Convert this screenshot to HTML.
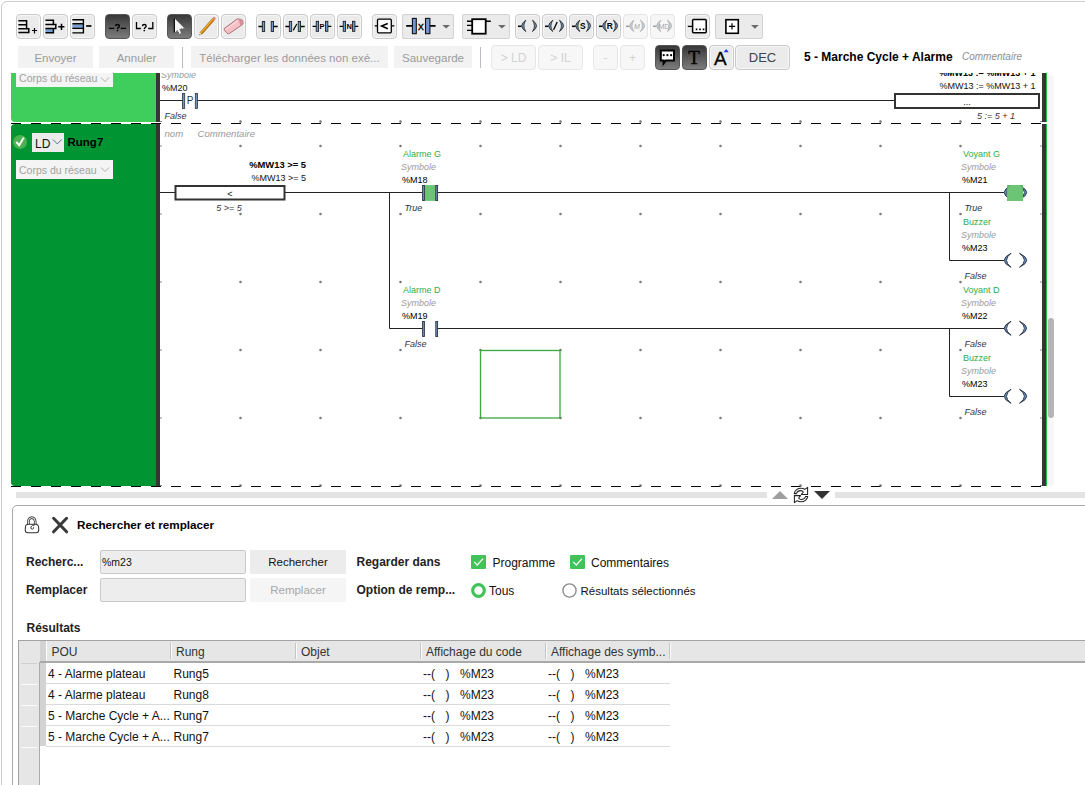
<!DOCTYPE html>
<html><head><meta charset="utf-8">
<style>
*{box-sizing:border-box;margin:0;padding:0}
html,body{width:1085px;height:785px;overflow:hidden;background:#fff}
body{position:relative;font-family:"Liberation Sans",sans-serif;color:#000}
.a{position:absolute}
.outer{position:absolute;left:1px;top:1px;width:1200px;height:900px;border:1px solid #cdcdcd;border-radius:6px}
.tb{position:absolute;top:14px;width:25px;height:25px;border:1px solid #c9c9c9;border-radius:4px;background:#ebebeb;box-shadow:inset 0 0 0 1px #f7f7f7}
.tb svg{position:absolute;left:-1px;top:-1px;width:24px;height:24px;overflow:visible}
.dk{background:linear-gradient(#383838,#7c7c7c);border-color:#555;box-shadow:none}
.dis{background:#f6f6f6;border-color:#e4e4e4;box-shadow:none}
.dd{position:absolute;top:14px;height:25px;border:1px solid #d2d2d2;border-radius:2px;background:#ebebeb}
.dd svg{position:absolute;left:-1px;top:-1px;overflow:visible}
.b2{position:absolute;top:46px;height:22px;background:#f2f2f2;color:#9b9b9b;font-size:11.5px;line-height:24px;text-align:center;white-space:nowrap}
.b3{position:absolute;top:45px;height:25px;background:#f7f7f7;border:1px solid #e6e6e6;border-radius:4px;color:#d2d2d2;font-size:12px;line-height:25px;text-align:center}
.sep{position:absolute;top:47px;width:1px;height:21px;background:#b9bdc4}
</style></head>
<body>
<div class="outer"></div>

<!--LADDER-->
<svg class="a" style="left:0;top:0" width="1085" height="785" viewBox="0 0 1085 785">
<defs><clipPath id="lc"><rect x="0" y="73" width="1085" height="416"/></clipPath></defs>
<g clip-path="url(#lc)" font-family="Liberation Sans" font-size="9">
<path d="M11 40H156V122H15Q11 122 11 118Z" fill="#3fcd5b"/>
<rect x="16" y="66" width="97" height="21" fill="#f4f4f4"/>
<text x="19" y="82" font-size="10.6" fill="#a2a2a2">Corps du réseau</text>
<path d="M101 77.5L105 81.5L109 77.5" fill="none" stroke="#a8a8a8" stroke-width=".9"/>
<path d="M15 124H156V486H15Q11 486 11 482V128Q11 124 15 124Z" fill="#009432"/>
<rect x="156" y="40" width="4" height="82" fill="#353535"/>
<rect x="156" y="123" width="4" height="363" fill="#353535"/>
<rect x="1042" y="40" width="4" height="82" fill="#353535"/>
<rect x="1046" y="40" width="1" height="82" fill="#1fbf3f"/>
<rect x="1042" y="124" width="4" height="362" fill="#353535"/>
<rect x="1046" y="124" width="1" height="362" fill="#1fbf3f"/>
<rect x="1047" y="75" width="7" height="411" rx="3" fill="#f7f7f7"/>
<rect x="1048" y="318" width="6" height="100" rx="3" fill="#b5b5b5"/>
<path d="M11 123.5H1042" stroke="#000" stroke-width="1.1" stroke-dasharray="10 10"/>
<path d="M11 486.5H1042" stroke="#000" stroke-width="1.1" stroke-dasharray="10 10"/>
<rect x="160" y="121.0" width="2" height="1" fill="#8a8a8a"/>
<circle cx="240.5" cy="121.5" r="1.25" fill="#767676"/>
<circle cx="320.5" cy="121.5" r="1.25" fill="#767676"/>
<circle cx="400.5" cy="121.5" r="1.25" fill="#767676"/>
<circle cx="480.5" cy="121.5" r="1.25" fill="#767676"/>
<circle cx="560.5" cy="121.5" r="1.25" fill="#767676"/>
<circle cx="640.5" cy="121.5" r="1.25" fill="#767676"/>
<circle cx="720.5" cy="121.5" r="1.25" fill="#767676"/>
<circle cx="800.5" cy="121.5" r="1.25" fill="#767676"/>
<circle cx="880.5" cy="121.5" r="1.25" fill="#767676"/>
<circle cx="960.5" cy="121.5" r="1.25" fill="#767676"/>
<rect x="1040" y="121.0" width="2" height="1" fill="#8a8a8a"/>
<rect x="160" y="145.5" width="2" height="1" fill="#8a8a8a"/>
<circle cx="240.5" cy="146" r="1.25" fill="#767676"/>
<circle cx="320.5" cy="146" r="1.25" fill="#767676"/>
<circle cx="400.5" cy="146" r="1.25" fill="#767676"/>
<circle cx="480.5" cy="146" r="1.25" fill="#767676"/>
<circle cx="560.5" cy="146" r="1.25" fill="#767676"/>
<circle cx="640.5" cy="146" r="1.25" fill="#767676"/>
<circle cx="720.5" cy="146" r="1.25" fill="#767676"/>
<circle cx="800.5" cy="146" r="1.25" fill="#767676"/>
<circle cx="880.5" cy="146" r="1.25" fill="#767676"/>
<circle cx="960.5" cy="146" r="1.25" fill="#767676"/>
<rect x="1040" y="145.5" width="2" height="1" fill="#8a8a8a"/>
<rect x="160" y="213.5" width="2" height="1" fill="#8a8a8a"/>
<circle cx="240.5" cy="214" r="1.25" fill="#767676"/>
<circle cx="320.5" cy="214" r="1.25" fill="#767676"/>
<circle cx="400.5" cy="214" r="1.25" fill="#767676"/>
<circle cx="480.5" cy="214" r="1.25" fill="#767676"/>
<circle cx="560.5" cy="214" r="1.25" fill="#767676"/>
<circle cx="640.5" cy="214" r="1.25" fill="#767676"/>
<circle cx="720.5" cy="214" r="1.25" fill="#767676"/>
<circle cx="800.5" cy="214" r="1.25" fill="#767676"/>
<circle cx="880.5" cy="214" r="1.25" fill="#767676"/>
<circle cx="960.5" cy="214" r="1.25" fill="#767676"/>
<rect x="1040" y="213.5" width="2" height="1" fill="#8a8a8a"/>
<rect x="160" y="281.5" width="2" height="1" fill="#8a8a8a"/>
<circle cx="240.5" cy="282" r="1.25" fill="#767676"/>
<circle cx="320.5" cy="282" r="1.25" fill="#767676"/>
<circle cx="400.5" cy="282" r="1.25" fill="#767676"/>
<circle cx="480.5" cy="282" r="1.25" fill="#767676"/>
<circle cx="560.5" cy="282" r="1.25" fill="#767676"/>
<circle cx="640.5" cy="282" r="1.25" fill="#767676"/>
<circle cx="720.5" cy="282" r="1.25" fill="#767676"/>
<circle cx="800.5" cy="282" r="1.25" fill="#767676"/>
<circle cx="880.5" cy="282" r="1.25" fill="#767676"/>
<circle cx="960.5" cy="282" r="1.25" fill="#767676"/>
<rect x="1040" y="281.5" width="2" height="1" fill="#8a8a8a"/>
<rect x="160" y="349.5" width="2" height="1" fill="#8a8a8a"/>
<circle cx="240.5" cy="350" r="1.25" fill="#767676"/>
<circle cx="320.5" cy="350" r="1.25" fill="#767676"/>
<circle cx="400.5" cy="350" r="1.25" fill="#767676"/>
<circle cx="480.5" cy="350" r="1.25" fill="#767676"/>
<circle cx="560.5" cy="350" r="1.25" fill="#767676"/>
<circle cx="640.5" cy="350" r="1.25" fill="#767676"/>
<circle cx="720.5" cy="350" r="1.25" fill="#767676"/>
<circle cx="800.5" cy="350" r="1.25" fill="#767676"/>
<circle cx="880.5" cy="350" r="1.25" fill="#767676"/>
<circle cx="960.5" cy="350" r="1.25" fill="#767676"/>
<rect x="1040" y="349.5" width="2" height="1" fill="#8a8a8a"/>
<rect x="160" y="417.5" width="2" height="1" fill="#8a8a8a"/>
<circle cx="240.5" cy="418" r="1.25" fill="#767676"/>
<circle cx="320.5" cy="418" r="1.25" fill="#767676"/>
<circle cx="400.5" cy="418" r="1.25" fill="#767676"/>
<circle cx="480.5" cy="418" r="1.25" fill="#767676"/>
<circle cx="560.5" cy="418" r="1.25" fill="#767676"/>
<circle cx="640.5" cy="418" r="1.25" fill="#767676"/>
<circle cx="720.5" cy="418" r="1.25" fill="#767676"/>
<circle cx="800.5" cy="418" r="1.25" fill="#767676"/>
<circle cx="880.5" cy="418" r="1.25" fill="#767676"/>
<circle cx="960.5" cy="418" r="1.25" fill="#767676"/>
<rect x="1040" y="417.5" width="2" height="1" fill="#8a8a8a"/>
<rect x="160" y="485.0" width="2" height="1" fill="#8a8a8a"/>
<circle cx="240.5" cy="485.5" r="1.25" fill="#767676"/>
<circle cx="320.5" cy="485.5" r="1.25" fill="#767676"/>
<circle cx="400.5" cy="485.5" r="1.25" fill="#767676"/>
<circle cx="480.5" cy="485.5" r="1.25" fill="#767676"/>
<circle cx="560.5" cy="485.5" r="1.25" fill="#767676"/>
<circle cx="640.5" cy="485.5" r="1.25" fill="#767676"/>
<circle cx="720.5" cy="485.5" r="1.25" fill="#767676"/>
<circle cx="800.5" cy="485.5" r="1.25" fill="#767676"/>
<circle cx="880.5" cy="485.5" r="1.25" fill="#767676"/>
<circle cx="960.5" cy="485.5" r="1.25" fill="#767676"/>
<rect x="1040" y="485.0" width="2" height="1" fill="#8a8a8a"/>
<text x="161" y="78" font-style="italic" fill="#9a9a9a">Symbole</text>
<text x="162" y="91" fill="#111">%M20</text>
<text x="164.5" y="118.6" font-style="italic" fill="#333">False</text>
<path d="M160 100.5H182.5M197.5 100.5H894" stroke="#222" stroke-width="1"/>
<rect x="182.5" y="93.5" width="2.2" height="15" fill="#6f93c2" stroke="#2b3340" stroke-width=".8"/>
<rect x="195.3" y="93.5" width="2.2" height="15" fill="#6f93c2" stroke="#2b3340" stroke-width=".8"/>
<text x="190" y="104" font-size="10" text-anchor="middle" fill="#333">P</text>
<text x="1035.5" y="76.3" font-weight="bold" text-anchor="end" fill="#000">%MW13 := %MW13 + 1</text>
<text x="1035.5" y="88.7" text-anchor="end" fill="#111">%MW13 := %MW13 + 1</text>
<rect x="895" y="94" width="144" height="14" fill="#fff" stroke="#333" stroke-width="2"/>
<text x="967" y="105" text-anchor="middle" fill="#111">...</text>
<text x="1015" y="118.8" font-style="italic" text-anchor="end" fill="#333">5 := 5 + 1</text>
<text x="164.5" y="136.5" font-size="9.6" font-style="italic" fill="#9a9a9a">nom</text>
<text x="197.5" y="136.5" font-size="9.6" font-style="italic" fill="#9a9a9a">Commentaire</text>
<text x="306" y="167.8" font-weight="bold" font-size="9.4" text-anchor="end" fill="#000">%MW13 &gt;= 5</text>
<text x="306" y="180.8" text-anchor="end" fill="#111">%MW13 &gt;= 5</text>
<path d="M160 192.5H175M285 192.5H422.5M437.5 192.5H949.5" stroke="#222" stroke-width="1"/>
<rect x="175.5" y="186" width="109" height="13.5" fill="#fff" stroke="#333" stroke-width="2"/>
<text x="230" y="196.5" text-anchor="middle" fill="#111">&lt;</text>
<text x="229" y="210.5" font-style="italic" text-anchor="middle" fill="#333">5 &gt;= 5</text>
<path d="M389.5 192V328.5H422.5M437.5 328.5H949.5" fill="none" stroke="#222" stroke-width="1"/>
<path d="M949.5 192V260.5H1004M949.5 328V396.5H1004M949.5 328.5H1004M949.5 192.5H1004" fill="none" stroke="#222" stroke-width="1"/>
<rect x="424" y="185.1" width="12.2" height="15.8" fill="#6cc474"/><rect x="422.6" y="185.5" width="1.8" height="15" fill="#6f93c2" stroke="#2b3340" stroke-width=".9"/><rect x="435.8" y="185.5" width="1.8" height="15" fill="#6f93c2" stroke="#2b3340" stroke-width=".9"/>
<rect x="422.6" y="321.5" width="1.8" height="15" fill="#6f93c2" stroke="#2b3340" stroke-width=".9"/><rect x="435.8" y="321.5" width="1.8" height="15" fill="#6f93c2" stroke="#2b3340" stroke-width=".9"/>
<path d="M1011 185.5Q997.4 192.5 1011 199.5Q1002 192.5 1011 185.5Z" fill="#6f93c2" stroke="#1f2a38" stroke-width=".9"/><path d="M1019.5 185.5Q1033.9 192.5 1019.5 199.5Q1029.3 192.5 1019.5 185.5Z" fill="#6f93c2" stroke="#1f2a38" stroke-width=".9"/><rect x="1007.2" y="185.0" width="15.7" height="16" fill="#4fae5a"/><rect x="1007.2" y="185.0" width="15.7" height="15" rx="5" fill="#6cc474"/><rect x="1007.2" y="194.5" width="15.7" height="6.5" fill="#6cc474"/>
<path d="M1011 253.3Q997.4 260.3 1011 267.3Q1002 260.3 1011 253.3Z" fill="#6f93c2" stroke="#1f2a38" stroke-width=".9"/><path d="M1019.5 253.3Q1033.9 260.3 1019.5 267.3Q1029.3 260.3 1019.5 253.3Z" fill="#6f93c2" stroke="#1f2a38" stroke-width=".9"/>
<path d="M1011 321.3Q997.4 328.3 1011 335.3Q1002 328.3 1011 321.3Z" fill="#6f93c2" stroke="#1f2a38" stroke-width=".9"/><path d="M1019.5 321.3Q1033.9 328.3 1019.5 335.3Q1029.3 328.3 1019.5 321.3Z" fill="#6f93c2" stroke="#1f2a38" stroke-width=".9"/>
<path d="M1011 389.3Q997.4 396.3 1011 403.3Q1002 396.3 1011 389.3Z" fill="#6f93c2" stroke="#1f2a38" stroke-width=".9"/><path d="M1019.5 389.3Q1033.9 396.3 1019.5 403.3Q1029.3 396.3 1019.5 389.3Z" fill="#6f93c2" stroke="#1f2a38" stroke-width=".9"/>
<text x="403" y="157" fill="#2fae44">Alarme G</text><text x="401" y="170" font-style="italic" fill="#9a9a9a">Symbole</text><text x="402" y="183" fill="#000">%M18</text><text x="404.5" y="210.5" font-style="italic" fill="#333">True</text>
<text x="403" y="293" fill="#2fae44">Alarme D</text><text x="401" y="306" font-style="italic" fill="#9a9a9a">Symbole</text><text x="402" y="319" fill="#000">%M19</text><text x="404.5" y="346.5" font-style="italic" fill="#333">False</text>
<text x="963" y="157" fill="#2fae44">Voyant G</text><text x="961" y="170" font-style="italic" fill="#9a9a9a">Symbole</text><text x="962" y="183" fill="#000">%M21</text><text x="964.5" y="210.5" font-style="italic" fill="#333">True</text>
<text x="963" y="225" fill="#2fae44">Buzzer</text><text x="961" y="238" font-style="italic" fill="#9a9a9a">Symbole</text><text x="962" y="251" fill="#000">%M23</text><text x="964.5" y="278.5" font-style="italic" fill="#333">False</text>
<text x="963" y="293" fill="#2fae44">Voyant D</text><text x="961" y="306" font-style="italic" fill="#9a9a9a">Symbole</text><text x="962" y="319" fill="#000">%M22</text><text x="964.5" y="346.5" font-style="italic" fill="#333">False</text>
<text x="963" y="361" fill="#2fae44">Buzzer</text><text x="961" y="374" font-style="italic" fill="#9a9a9a">Symbole</text><text x="962" y="387" fill="#000">%M23</text><text x="964.5" y="414.5" font-style="italic" fill="#333">False</text>
<rect x="480.5" y="350.5" width="79.5" height="67.5" fill="none" stroke="#3aa83f" stroke-width="1.3"/>
</g>
<rect x="16" y="492" width="751" height="6" fill="#e2e3e2"/>
<rect x="835" y="492" width="250" height="6" fill="#e2e3e2"/>
<path d="M772 499H788L780 491Z" fill="#9e9e9e"/>
<path d="M814 491H830L822 499Z" fill="#333"/>
</svg>
<!--/LADDER-->
<!--RUNG7HDR-->
<svg class="a" style="left:0;top:0" width="1085" height="160" viewBox="0 0 1085 160">
<circle cx="20" cy="142" r="7" fill="#4db151"/>
<path d="M16.3 141.8L19.2 145.3L23.8 137.6" fill="none" stroke="#fff" stroke-width="1.9"/>
<rect x="32" y="133" width="32" height="19" fill="#ececec"/>
<path d="M53 139.6L57.3 143.9L61.6 139.6" fill="none" stroke="#4a5a80" stroke-width=".9"/>
</svg>
<div class="a" style="left:35px;top:137px;font-size:12px;line-height:15px;color:#111">LD</div>
<div class="a" style="left:67.5px;top:135px;font-size:11.5px;font-weight:bold;line-height:15px;color:#000">Rung7</div>
<div class="a" style="left:16px;top:160px;width:97px;height:19px;background:#f4f4f4"></div>
<div class="a" style="left:19px;top:163px;font-size:10.5px;line-height:15px;color:#a2a2a2;white-space:nowrap">Corps du réseau</div>
<svg class="a" style="left:0;top:0" width="1085" height="200" viewBox="0 0 1085 200"><path d="M101 167.5L105 171.5L109 167.5" fill="none" stroke="#a8a8a8" stroke-width=".9"/></svg>
<svg class="a" style="left:790px;top:484px" width="22" height="22" viewBox="0 0 22 22">
<path d="M4.2 9.6Q5.5 4.2 11 4.2Q13.2 4.2 14.8 5.4L17.6 3.4V10.4H11.4L13.4 8Q12.4 6.6 11 6.6Q7.2 6.6 6.4 9.6Z" fill="#fff" stroke="#222" stroke-width="1.05" stroke-linejoin="round"/>
<path d="M17.8 12.4Q16.5 17.8 11 17.8Q8.8 17.8 7.2 16.6L4.4 18.6V11.6H10.6L8.6 14Q9.6 15.4 11 15.4Q14.8 15.4 15.6 12.4Z" fill="#fff" stroke="#222" stroke-width="1.05" stroke-linejoin="round"/>
</svg>

<!-- Toolbar row 1 -->
<div class="tb" style="left:16px"><svg viewBox="0 0 24 24"><path d="M2.4 6.8H10.6V14.7M2.4 10.7H10.6M2.4 14.7H12.8V18.4H2.4" fill="none" stroke="#000" stroke-width="1.5"/><path d="M15.9 16.5H21.1M18.5 14.1V19.6" stroke="#000" stroke-width="1.2"/></svg></div>
<div class="tb" style="left:43px"><svg viewBox="0 0 24 24"><rect x="2.4" y="14.8" width="8" height="3.6" fill="#78a0d2"/><path d="M2.4 6.2H10.4V10.4M2.4 10.4H12.8V14.5H2.4M10.4 14.5V18.8H2.4" fill="none" stroke="#000" stroke-width="1.5"/><path d="M15.3 12.7H21.4M18.5 9.8V15.9" stroke="#000" stroke-width="1.5"/></svg></div>
<div class="tb" style="left:70px"><svg viewBox="0 0 24 24"><rect x="2.4" y="10.4" width="11" height="3.6" fill="#78a0d2"/><path d="M2.4 5.7H13.4V18.9H2.4M2.4 9.8H13.4M2.4 14.4H13.4" fill="none" stroke="#000" stroke-width="1.4"/><path d="M16.2 12H21.4" stroke="#000" stroke-width="1.7"/></svg></div>

<div class="tb dk" style="left:105px"><svg viewBox="0 0 24 24"><path d="M3.9 14.4H9.1M15.8 14.4H21" stroke="#000" stroke-width="1.3"/><path d="M10.6 12.2Q10.6 10.5 12.5 10.5Q14.4 10.5 14.4 12.1Q14.4 13.1 13.3 13.6Q12.5 14 12.5 15" fill="none" stroke="#000" stroke-width="1.3"/><circle cx="12.5" cy="16.5" r=".85"/></svg></div>
<div class="tb" style="left:132px"><svg viewBox="0 0 24 24"><path d="M4.5 8V14.5H8.9M16.2 14.5H20.8V8" fill="none" stroke="#000" stroke-width="1.3"/><path d="M10.4 12.2Q10.4 10.5 12.3 10.5Q14.200000000000001 10.5 14.200000000000001 12.1Q14.200000000000001 13.1 13.100000000000001 13.6Q12.3 14 12.3 15" fill="none" stroke="#000" stroke-width="1.3"/><circle cx="12.3" cy="16.5" r=".85"/></svg></div>

<div class="tb dk" style="left:167px"><svg viewBox="0 0 24 24"><path d="M7.6 4.6V18.6L10.2 16.4L12.6 20.4L14.6 19.4L12.8 15.4L17.6 14.4Z" fill="#f4f4f4"/><path d="M7.3 4.4V18.6" stroke="#000" stroke-width="1.2"/><path d="M10.2 16.4L12.6 20.4L14.6 19.4L12.8 15.4L16.8 14.2" fill="none" stroke="#111" stroke-width=".7" stroke-dasharray="1 .8"/></svg></div>
<div class="tb" style="left:194px"><svg viewBox="0 0 24 24"><path d="M5.97 18.54L7.93 20.26L20.58 5.86L18.62 4.14Z" fill="#f2b233"/><path d="M7.93 20.26L20.58 5.86L19.6 5L6.95 19.4Z" fill="#c97a0c"/><path d="M5.97 18.54L7.93 20.26L20.58 5.86M18.62 4.14L5.97 18.54" fill="none" stroke="#7a4a08" stroke-width=".5"/><path d="M18.62 4.14L20.58 5.86L21.9 4.35L19.9 2.65Z" fill="#e8727c"/><path d="M5.3 21.3L5.97 18.54L7.93 20.26Z" fill="#e9d2a6"/><path d="M5.3 21.3L5.8 20L6.6 20.7Z" fill="#333"/></svg></div>
<div class="tb" style="left:221px"><svg viewBox="0 0 24 24"><path d="M3.2 14.6L15.6 5.3Q16.4 4.8 17.6 5L20.4 5.6Q21.6 6 21.9 7.4L22 9.6Q22 10.2 21.4 10.6L8.2 19.6Q7.4 20 6.6 19.6L3.6 16.4Q3 15.4 3.2 14.6Z" fill="#f8c0c6" stroke="#8e4d55" stroke-width=".75"/><path d="M17.6 5.2L19.2 11.6L21.4 10.6Q22 10.2 22 9.6L21.9 7.4Q21.6 6 20.4 5.6Z" fill="#d98f98"/><path d="M4.2 15.8L16.8 6.6" stroke="#fde3e6" stroke-width="1"/></svg></div>

<div class="tb" style="left:256px"><svg viewBox="0 0 24 24"><path d="M2.4 12.45H6.4M17.6 12.45H21.7" stroke="#000" stroke-width="1.4"/><rect x="6.3" y="7.4" width="2.4" height="10.1" fill="#6f99cf" stroke="#111" stroke-width=".8"/><rect x="15.2" y="7.4" width="2.4" height="10.1" fill="#6f99cf" stroke="#111" stroke-width=".8"/></svg></div>
<div class="tb" style="left:283px"><svg viewBox="0 0 24 24"><path d="M2.4 12.45H6.4M17.6 12.45H21.7" stroke="#000" stroke-width="1.4"/><rect x="6.3" y="7.4" width="2.4" height="10.1" fill="#6f99cf" stroke="#111" stroke-width=".8"/><rect x="15.2" y="7.4" width="2.4" height="10.1" fill="#6f99cf" stroke="#111" stroke-width=".8"/><path d="M10.2 16.4L13.8 10" stroke="#000" stroke-width="1.2"/></svg></div>
<div class="tb" style="left:310px"><svg viewBox="0 0 24 24"><path d="M2.6 12.4H6.2M18 12.4H21.3" stroke="#000" stroke-width="1.4"/><rect x="6.2" y="7.3" width="2.4" height="10" fill="#6f99cf" stroke="#111" stroke-width=".8"/><rect x="15.5" y="7.3" width="2.4" height="10" fill="#6f99cf" stroke="#111" stroke-width=".8"/><text x="12.1" y="15.2" font-size="7.5" font-weight="bold" text-anchor="middle" font-family="Liberation Sans">P</text></svg></div>
<div class="tb" style="left:337px"><svg viewBox="0 0 24 24"><path d="M2.6 12.4H6.2M18 12.4H21.3" stroke="#000" stroke-width="1.4"/><rect x="6.2" y="7.3" width="2.4" height="10" fill="#6f99cf" stroke="#111" stroke-width=".8"/><rect x="15.5" y="7.3" width="2.4" height="10" fill="#6f99cf" stroke="#111" stroke-width=".8"/><text x="12.1" y="15.2" font-size="7.5" font-weight="bold" text-anchor="middle" font-family="Liberation Sans">N</text></svg></div>

<div class="tb" style="left:372px"><svg viewBox="0 0 24 24"><rect x="5.5" y="5.2" width="13.8" height="13.6" rx="1" fill="#fff" stroke="#000" stroke-width="1.3"/><path d="M2.7 11.9H5M19.8 11.9H22.3" stroke="#000" stroke-width="1.3"/><path d="M15.8 9.4L9.6 12L15.8 14.8" fill="none" stroke="#000" stroke-width="1.6"/></svg></div>

<div class="dd" style="left:402px;width:52px"><svg width="52" height="24" viewBox="0 0 52 24"><path d="M4.2 11.9H10.2M28 11.9H33.6" stroke="#000" stroke-width="1.6"/><rect x="10.4" y="4.4" width="3.9" height="15.3" fill="#6f99cf" stroke="#111" stroke-width="1.1"/><rect x="23.5" y="4.4" width="4.4" height="15.3" fill="#6f99cf" stroke="#111" stroke-width="1.1"/><text x="18.9" y="15.6" font-size="11.5" text-anchor="middle" font-family="Liberation Sans" fill="#000" stroke="#000" stroke-width=".3">x</text><path d="M40.3 10.9H48L44.15 14.5Z" fill="#6a6a6a"/></svg></div>
<div class="dd" style="left:462px;width:48px"><svg width="48" height="24" viewBox="0 0 48 24"><rect x="10.2" y="5.2" width="13.5" height="14.5" fill="#fff" stroke="#000" stroke-width="1.8"/><path d="M5 7.3H10.2M5 11.4H10.2M5 16.4H10.2M23.7 7.3H28.8" stroke="#000" stroke-width="1.4"/><path d="M36 10.9H43.8L39.9 14.5Z" fill="#6a6a6a"/></svg></div>

<!-- coils -->
<div class="tb" style="left:515px"><svg viewBox="0 0 24 24"><path d="M3 12.3H6.6" stroke="#000" stroke-width="1.5"/><path d="M10.8 6.2Q2.6 11.85 10.8 17.5Q7.0 11.85 10.8 6.2Z" fill="#6f93c2" stroke="#222" stroke-width=".8"/><path d="M17.5 6.2Q25.6 11.85 17.5 17.5Q21.4 11.85 17.5 6.2Z" fill="#6f93c2" stroke="#222" stroke-width=".8"/></svg></div>
<div class="tb" style="left:542px"><svg viewBox="0 0 24 24"><path d="M3 12.3H6.6" stroke="#000" stroke-width="1.5"/><path d="M10.8 6.2Q2.6 11.85 10.8 17.5Q7.0 11.85 10.8 6.2Z" fill="#6f93c2" stroke="#222" stroke-width=".8"/><path d="M17.5 6.2Q25.6 11.85 17.5 17.5Q21.4 11.85 17.5 6.2Z" fill="#6f93c2" stroke="#222" stroke-width=".8"/><path d="M11.6 15.8L15.2 8" stroke="#000" stroke-width="1.3"/></svg></div>
<div class="tb" style="left:569px"><svg viewBox="0 0 24 24"><path d="M3 12.3H6.6" stroke="#000" stroke-width="1.5"/><path d="M10.8 6.2Q2.6 11.85 10.8 17.5Q7.0 11.85 10.8 6.2Z" fill="#6f93c2" stroke="#222" stroke-width=".8"/><path d="M17.5 6.2Q25.6 11.85 17.5 17.5Q21.4 11.85 17.5 6.2Z" fill="#6f93c2" stroke="#222" stroke-width=".8"/><text x="13.9" y="15.1" font-size="8.4" font-weight="bold" text-anchor="middle" font-family="Liberation Sans" fill="#000">S</text></svg></div>
<div class="tb" style="left:596px"><svg viewBox="0 0 24 24"><path d="M3 12.3H6.6" stroke="#000" stroke-width="1.5"/><path d="M10.8 6.2Q2.6 11.85 10.8 17.5Q7.0 11.85 10.8 6.2Z" fill="#6f93c2" stroke="#222" stroke-width=".8"/><path d="M17.5 6.2Q25.6 11.85 17.5 17.5Q21.4 11.85 17.5 6.2Z" fill="#6f93c2" stroke="#222" stroke-width=".8"/><text x="13.9" y="15.1" font-size="8.4" font-weight="bold" text-anchor="middle" font-family="Liberation Sans" fill="#000">R</text></svg></div>
<div class="tb dis" style="left:623px"><svg viewBox="0 0 24 24" opacity=".35"><path d="M3 12.3H6.6" stroke="#000" stroke-width="1.5"/><path d="M10.8 6.2Q2.6 11.85 10.8 17.5Q7.0 11.85 10.8 6.2Z" fill="#6f93c2" stroke="#222" stroke-width=".8"/><path d="M17.5 6.2Q25.6 11.85 17.5 17.5Q21.4 11.85 17.5 6.2Z" fill="#6f93c2" stroke="#222" stroke-width=".8"/><text x="13.9" y="14.8" font-size="7" font-style="italic" text-anchor="middle" font-family="Liberation Sans">M</text></svg></div>
<div class="tb dis" style="left:650px"><svg viewBox="0 0 24 24" opacity=".35"><path d="M3 12.3H6.6" stroke="#000" stroke-width="1.5"/><path d="M10.8 6.2Q2.6 11.85 10.8 17.5Q7.0 11.85 10.8 6.2Z" fill="#6f93c2" stroke="#222" stroke-width=".8"/><path d="M17.5 6.2Q25.6 11.85 17.5 17.5Q21.4 11.85 17.5 6.2Z" fill="#6f93c2" stroke="#222" stroke-width=".8"/><text x="13.9" y="14.8" font-size="7" text-anchor="middle" font-family="Liberation Sans">MD</text></svg></div>

<div class="tb" style="left:685px"><svg viewBox="0 0 24 24"><rect x="7.6" y="5.6" width="13.6" height="13.2" rx="1" fill="#fff" stroke="#000" stroke-width="1.5"/><path d="M2.8 12.4H7.2" stroke="#000" stroke-width="1.3"/><path d="M10.7 15.4h1.7M14.2 15.4h1.7M17.7 15.4h1.7" stroke="#000" stroke-width="1.7"/></svg></div>
<div class="dd" style="left:715px;width:48px"><svg width="48" height="24" viewBox="0 0 48 24"><rect x="10.9" y="5.7" width="12.4" height="13.6" fill="#fff" stroke="#000" stroke-width="1.6"/><path d="M13.9 12.4H20.2M17 9.3V15.5" stroke="#000" stroke-width="1.2"/><path d="M36 11H43.8L39.9 14.7Z" fill="#6a6a6a"/></svg></div>

<!-- Toolbar row 2 -->
<div class="b2" style="left:18px;width:75px">Envoyer</div>
<div class="b2" style="left:99px;width:75px">Annuler</div>
<div class="sep" style="left:182px"></div>
<div class="b2" style="left:191px;width:197px">Télécharger les données non exé...</div>
<div class="b2" style="left:394px;width:78px">Sauvegarde</div>
<div class="sep" style="left:480px"></div>
<div class="b3" style="left:491px;width:45px">&gt; LD</div>
<div class="b3" style="left:538px;width:45px">&gt; IL</div>
<div class="b3" style="left:593px;width:25px">-</div>
<div class="b3" style="left:620px;width:25px">+</div>


<div class="tb dk" style="left:655px;top:45px;width:25px;height:25px"><svg viewBox="0 0 24 24"><path d="M5.8 5.4H19V15.4H10.8L8.6 18.4V15.4H5.8Z" fill="#fff" stroke="#000" stroke-width="2"/><circle cx="8.7" cy="10.2" r="1.1"/><circle cx="12.4" cy="10.2" r="1.1"/><circle cx="16.1" cy="10.2" r="1.1"/></svg></div>
<div class="tb dk" style="left:682px;top:45px;width:25px;height:25px"><svg viewBox="0 0 24 24"><text x="12.1" y="19.4" font-size="19" text-anchor="middle" font-family="Liberation Serif" fill="#000" stroke="#000" stroke-width=".35">T</text></svg></div>
<div class="tb" style="left:709px;top:45px;width:25px;height:25px"><svg viewBox="0 0 24 24"><text x="11.4" y="20.2" font-size="19" text-anchor="middle" font-family="Liberation Sans" fill="#000" stroke="#000" stroke-width=".3">A</text><path d="M14.6 7.2L17.2 4.1L19.8 7.2Z" fill="#1a3cff"/></svg></div>
<div class="tb" style="left:735px;top:45px;width:55px;height:25px;font-size:13px;line-height:23px;text-align:center;color:#3d4450">DEC</div>
<div class="a" style="left:804px;top:49px;font-size:12px;font-weight:bold;line-height:16px;white-space:nowrap">5 - Marche Cycle + Alarme</div>
<div class="a" style="left:962px;top:50px;font-size:10px;font-style:italic;color:#8e8e8e;line-height:14px">Commentaire</div>

<!--PANEL-->
<div class="a" style="left:12px;top:505px;width:1100px;height:300px;border:1px solid #a9a9a9;border-radius:5px"></div>
<svg class="a" style="left:0;top:0" width="1085" height="785" viewBox="0 0 1085 785">
<path d="M28.4 524.8V521.4A3.4 3.8 0 0 1 35.2 521.4V524.2" fill="none" stroke="#333" stroke-width="2.6"/>
<path d="M28.4 524.8V521.4A3.4 3.8 0 0 1 35.2 521.4V524.2" fill="none" stroke="#fff" stroke-width="1"/>
<path d="M28.6 524.3H35.4Q38.7 524.3 38.7 528V530.3Q38.7 532.8 36 532.8H28Q25.3 532.8 25.3 530.3V528Q25.3 524.3 28.6 524.3Z" fill="#fff" stroke="#333" stroke-width="1.05"/>
<path d="M35 524.6L32.6 525.6Q30.6 526.4 30.8 528Q31.2 529.4 32.6 529.1Q34 528.6 33.6 527.3" fill="none" stroke="#333" stroke-width="1"/>
<path d="M53.6 518.3L66.6 531.8M66.6 518.3L53.6 531.8" stroke="#383838" stroke-width="3" stroke-linecap="round"/>
</svg>
<div class="a" style="left:77px;top:518px;font-size:11.7px;font-weight:bold;line-height:14px;white-space:nowrap">Rechercher et remplacer</div>
<div class="a" style="left:26px;top:555px;font-size:12px;font-weight:bold;line-height:14px;color:#222">Recherc...</div>
<div class="a" style="left:26px;top:583px;font-size:12px;font-weight:bold;line-height:14px;color:#222">Remplacer</div>
<div class="a" style="left:100px;top:550px;width:146px;height:24px;border:1px solid #c9c9c9;border-radius:2px;background:#ededed;font-size:10.5px;line-height:23px;padding-left:1px;color:#111">%m23</div>
<div class="a" style="left:100px;top:578px;width:146px;height:24px;border:1px solid #c9c9c9;border-radius:2px;background:#ededed"></div>
<div class="a" style="left:250px;top:550px;width:96px;height:24px;background:#ececec;font-size:11.5px;line-height:24px;text-align:center;color:#111">Rechercher</div>
<div class="a" style="left:250px;top:578px;width:96px;height:24px;background:#f5f5f5;font-size:11.5px;line-height:24px;text-align:center;color:#a6a6a6">Remplacer</div>
<div class="a" style="left:356.5px;top:555px;font-size:12px;font-weight:bold;line-height:14px;color:#222">Regarder dans</div>
<div class="a" style="left:356.5px;top:583px;font-size:12px;font-weight:bold;line-height:14px;color:#222;white-space:nowrap">Option de remp...</div>
<svg class="a" style="left:0;top:0" width="1085" height="785" viewBox="0 0 1085 785">
<rect x="471" y="555" width="15" height="14" rx="1" fill="#40c459"/>
<path d="M474.2 561.8L477.3 565L483 558.6" fill="none" stroke="#fff" stroke-width="1.2"/>
<rect x="570" y="555" width="15" height="14" rx="1" fill="#40c459"/>
<path d="M573.2 561.8L576.3 565L582 558.6" fill="none" stroke="#fff" stroke-width="1.2"/>
<circle cx="478.5" cy="590.5" r="5.8" fill="#fff" stroke="#40c459" stroke-width="3.2"/>
<circle cx="569.5" cy="590.5" r="6.6" fill="#fff" stroke="#8c8c8c" stroke-width="1.4"/>
</svg>
<div class="a" style="left:492.5px;top:556px;font-size:12px;line-height:14px;color:#111">Programme</div>
<div class="a" style="left:591px;top:556px;font-size:12px;line-height:14px;color:#111">Commentaires</div>
<div class="a" style="left:489px;top:584px;font-size:12px;line-height:14px;color:#111">Tous</div>
<div class="a" style="left:580.5px;top:584px;font-size:11.5px;line-height:14px;color:#111;white-space:nowrap">Résultats sélectionnés</div>
<div class="a" style="left:26.5px;top:621px;font-size:12px;font-weight:bold;line-height:14px;color:#222">Résultats</div>
<!--TABLE-->
<div class="a" style="left:18px;top:640px;width:1100px;height:200px;border-left:1px solid #a3a3a3;border-top:1px solid #a3a3a3"></div>
<div class="a" style="left:19px;top:641px;width:21px;height:150px;background:#e6e6e6"></div>
<div class="a" style="left:40px;top:641px;width:1100px;height:21px;background:#e6e6e6"></div>
<div class="a" style="left:40px;top:641px;width:6px;height:105px;background:#d3d3d3"></div>
<div class="a" style="left:46px;top:641px;width:1px;height:21px;background:#fff"></div>
<div class="a" style="left:40px;top:661px;width:1100px;height:2px;background:#a9a9a9"></div>
<div class="a" style="left:39px;top:662px;width:1px;height:130px;background:#ababab"></div>
<div class="a" style="left:21px;top:663px;width:16px;height:1px;background:#cfcfcf"></div>
<div class="a" style="left:21px;top:684px;width:16px;height:1px;background:#fbfbfb"></div>
<div class="a" style="left:21px;top:705px;width:16px;height:1px;background:#fbfbfb"></div>
<div class="a" style="left:21px;top:726px;width:16px;height:1px;background:#fbfbfb"></div>
<div class="a" style="left:21px;top:747px;width:16px;height:1px;background:#fbfbfb"></div>
<div class="a" style="left:170px;top:643px;width:1px;height:16px;background:#c4c4c4"></div>
<div class="a" style="left:171px;top:643px;width:1px;height:16px;background:#fbfbfb"></div>
<div class="a" style="left:295px;top:643px;width:1px;height:16px;background:#c4c4c4"></div>
<div class="a" style="left:296px;top:643px;width:1px;height:16px;background:#fbfbfb"></div>
<div class="a" style="left:420px;top:643px;width:1px;height:16px;background:#c4c4c4"></div>
<div class="a" style="left:421px;top:643px;width:1px;height:16px;background:#fbfbfb"></div>
<div class="a" style="left:545px;top:643px;width:1px;height:16px;background:#c4c4c4"></div>
<div class="a" style="left:546px;top:643px;width:1px;height:16px;background:#fbfbfb"></div>
<div class="a" style="left:669px;top:643px;width:1px;height:16px;background:#c4c4c4"></div>
<div class="a" style="left:670px;top:643px;width:1px;height:16px;background:#fbfbfb"></div>
<div class="a" style="left:46px;top:683px;width:624px;height:1px;background:#dadada"></div>
<div class="a" style="left:46px;top:704px;width:624px;height:1px;background:#dadada"></div>
<div class="a" style="left:46px;top:725px;width:624px;height:1px;background:#dadada"></div>
<div class="a" style="left:46px;top:746px;width:624px;height:1px;background:#dadada"></div>
<div class="a" style="left:51.5px;top:644px;font-size:12px;line-height:16px;color:#333;white-space:nowrap">POU</div>
<div class="a" style="left:176px;top:644px;font-size:12px;line-height:16px;color:#333;white-space:nowrap">Rung</div>
<div class="a" style="left:301px;top:644px;font-size:12px;line-height:16px;color:#333;white-space:nowrap">Objet</div>
<div class="a" style="left:426px;top:644px;font-size:12px;line-height:16px;color:#333;white-space:nowrap">Affichage du code</div>
<div class="a" style="left:551px;top:644px;font-size:12px;line-height:16px;color:#333;white-space:nowrap">Affichage des symb...</div>
<div class="a" style="left:48px;top:666px;font-size:12px;line-height:16px;color:#111;white-space:nowrap">4 - Alarme plateau</div>
<div class="a" style="left:173.5px;top:666px;font-size:12px;line-height:16px;color:#111">Rung5</div>
<div class="a" style="left:423px;top:666px;font-size:12px;line-height:16px;color:#111">--(</div><div class="a" style="left:445.5px;top:666px;font-size:12px;line-height:16px;color:#111">)</div><div class="a" style="left:460px;top:666px;font-size:12px;line-height:16px;color:#111">%M23</div>
<div class="a" style="left:548px;top:666px;font-size:12px;line-height:16px;color:#111">--(</div><div class="a" style="left:570.5px;top:666px;font-size:12px;line-height:16px;color:#111">)</div><div class="a" style="left:585px;top:666px;font-size:12px;line-height:16px;color:#111">%M23</div>
<div class="a" style="left:48px;top:687px;font-size:12px;line-height:16px;color:#111;white-space:nowrap">4 - Alarme plateau</div>
<div class="a" style="left:173.5px;top:687px;font-size:12px;line-height:16px;color:#111">Rung8</div>
<div class="a" style="left:423px;top:687px;font-size:12px;line-height:16px;color:#111">--(</div><div class="a" style="left:445.5px;top:687px;font-size:12px;line-height:16px;color:#111">)</div><div class="a" style="left:460px;top:687px;font-size:12px;line-height:16px;color:#111">%M23</div>
<div class="a" style="left:548px;top:687px;font-size:12px;line-height:16px;color:#111">--(</div><div class="a" style="left:570.5px;top:687px;font-size:12px;line-height:16px;color:#111">)</div><div class="a" style="left:585px;top:687px;font-size:12px;line-height:16px;color:#111">%M23</div>
<div class="a" style="left:48px;top:708px;font-size:12px;line-height:16px;color:#111;white-space:nowrap">5 - Marche Cycle + A...</div>
<div class="a" style="left:173.5px;top:708px;font-size:12px;line-height:16px;color:#111">Rung7</div>
<div class="a" style="left:423px;top:708px;font-size:12px;line-height:16px;color:#111">--(</div><div class="a" style="left:445.5px;top:708px;font-size:12px;line-height:16px;color:#111">)</div><div class="a" style="left:460px;top:708px;font-size:12px;line-height:16px;color:#111">%M23</div>
<div class="a" style="left:548px;top:708px;font-size:12px;line-height:16px;color:#111">--(</div><div class="a" style="left:570.5px;top:708px;font-size:12px;line-height:16px;color:#111">)</div><div class="a" style="left:585px;top:708px;font-size:12px;line-height:16px;color:#111">%M23</div>
<div class="a" style="left:48px;top:729px;font-size:12px;line-height:16px;color:#111;white-space:nowrap">5 - Marche Cycle + A...</div>
<div class="a" style="left:173.5px;top:729px;font-size:12px;line-height:16px;color:#111">Rung7</div>
<div class="a" style="left:423px;top:729px;font-size:12px;line-height:16px;color:#111">--(</div><div class="a" style="left:445.5px;top:729px;font-size:12px;line-height:16px;color:#111">)</div><div class="a" style="left:460px;top:729px;font-size:12px;line-height:16px;color:#111">%M23</div>
<div class="a" style="left:548px;top:729px;font-size:12px;line-height:16px;color:#111">--(</div><div class="a" style="left:570.5px;top:729px;font-size:12px;line-height:16px;color:#111">)</div><div class="a" style="left:585px;top:729px;font-size:12px;line-height:16px;color:#111">%M23</div>
<!--/TABLE-->
</body></html>
